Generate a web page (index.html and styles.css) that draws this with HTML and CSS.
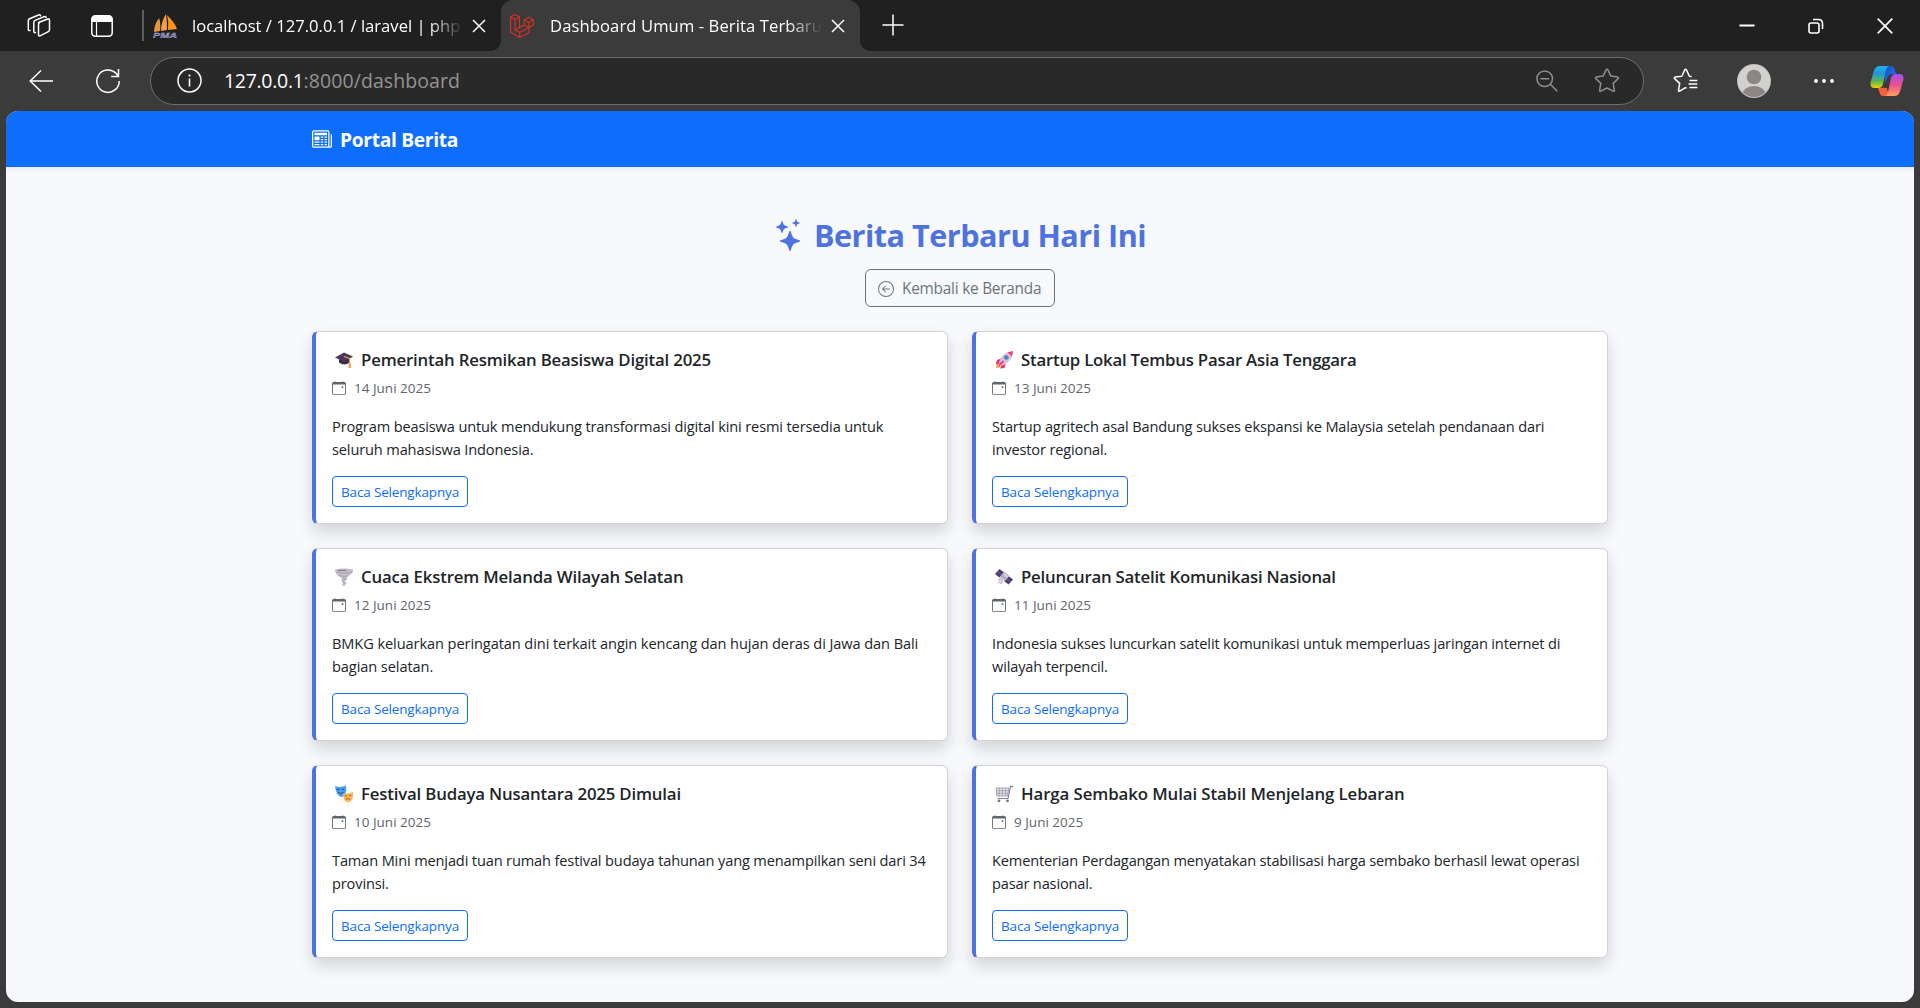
FILE: index.html
```html
<!DOCTYPE html>
<html lang="id">
<head>
<meta charset="utf-8">
<title>Dashboard Umum - Berita Terbaru</title>
<link rel="stylesheet" href="styles.css">
</head>
<body>
<svg class="defs" width="0" height="0">
  <symbol id="calendar" viewBox="0 0 16 16"><path d="M11 6.5a.5.5 0 0 1 .5-.5h1a.5.5 0 0 1 .5.5v1a.5.5 0 0 1-.5.5h-1a.5.5 0 0 1-.5-.5v-1z"/><path d="M3.5 0a.5.5 0 0 1 .5.5V1h8V.5a.5.5 0 0 1 1 0V1h1a2 2 0 0 1 2 2v11a2 2 0 0 1-2 2H2a2 2 0 0 1-2-2V3a2 2 0 0 1 2-2h1V.5a.5.5 0 0 1 .5-.5zM1 4v10a1 1 0 0 0 1 1h12a1 1 0 0 0 1-1V4H1z"/></symbol>
  <symbol id="close" viewBox="0 0 14 14"><path d="M1 1l12 12M13 1L1 13" fill="none" stroke="#fff" stroke-width="1.5"/></symbol>
</svg>

<header class="tabstrip">
  <svg class="workspaces" width="26" height="26" viewBox="0 0 26 26" fill="none" stroke="#fff" stroke-width="1.5" stroke-linejoin="round" stroke-linecap="round"><path d="M13.5 10.2l9.300-3.500q1.700-.6 1.700 1.200v9.600q0 1.300-1.200 1.800l-7.800 4q-2 .9-2-1.100v-9.800q0-1.700 1.200-2.200z" transform="translate(-1 -.7)"/><path d="M9.500 19.500q-1.700.6-1.700-1.200V9.500q0-1.500 1.300-2.100l9-3.700q1.700-.5 2 .8"/><path d="M4 17.500Q2.300 18 2.300 16V7.800q0-1.500 1.300-2.100L12.600 2q1.700-.5 2 .8"/></svg>
  <svg class="vertical-tabs" width="22" height="22" viewBox="0 0 22 22" fill="none"><rect x=".8" y=".8" width="20.400" height="20.400" rx="3.500" stroke="#fff" stroke-width="1.500"/><path d="M1 7V4q0-3 3-3h14q3 0 3 3v3z" fill="#fff"/><path d="M5.500 7v14" stroke="#fff" stroke-width="1.200"/></svg>
  <span class="divider"></span>
  <div class="tab">
    <svg width="24" height="24" viewBox="0 0 24 24"><path d="M6 4Q1 11 1 18l6-1Q8 9 6 4z" fill="#e8963c"/><path d="M13 0Q8 8 8 17l6-1Q14 7 13 0z" fill="#f0a04a"/><path d="M14 1q8 8 10 14l-9 1q1-8-1-15z" fill="#ff931e"/><text class="pma" x="0" y="23.500" textLength="24" lengthAdjust="spacingAndGlyphs">PMA</text></svg>
    <span class="tab-title tab-title-first">localhost / 127.0.0.1 / laravel | php</span>
    <svg width="14" height="14"><use href="#close"/></svg>
  </div>
  <div class="tab tab-active">
    <svg width="24" height="24" viewBox="0 0 24 24" fill="none" stroke="#d93025" stroke-width="1.150" stroke-linejoin="round"><path d="M.6 2.700L5 .6l4.500 2.100v11.100l4.700-2.700V5.900l4.700-2.600 4.500 2.600v5.200l-4.500 2.600v5L9.700 23.500.6 18.300zM.6 2.700L5 5.300l4.500-2.600M5 5.300v10.800l4.700 2.500 9.200-5M5 16.100l9.200-5M9.700 18.600v4.900M14.200 5.900l4.700 2.600 4.500-2.600M18.900 8.500v5.200l-4.700-2.600"/></svg>
    <span class="tab-title">Dashboard Umum - Berita Terbaru</span>
    <svg width="14" height="14"><use href="#close"/></svg>
  </div>
  <svg class="new-tab" width="22" height="22" viewBox="0 0 22 22"><path d="M.5 11h21M11 .5v21" stroke="#fff" stroke-width="1.500"/></svg>
  <div class="window-controls">
    <svg width="16" height="16" viewBox="0 0 16 16"><path d="M.5 7.500h15" stroke="#fff" stroke-width="2"/></svg>
    <svg width="16" height="16" viewBox="0 0 16 16" fill="none" stroke="#fff" stroke-width="1.600"><rect x="1" y="5" width="10" height="10" rx="2"/><path d="M5 1.500h5.500q4 0 4 4V11"/></svg>
    <svg width="16" height="16" viewBox="0 0 16 16"><path d="M.7.700l14.600 14.600M15.300.7L.7 15.300" stroke="#fff" stroke-width="1.700"/></svg>
  </div>
</header>

<div class="toolbar">
  <svg width="24" height="24" viewBox="0 0 24 24" fill="none" stroke="#fff" stroke-width="1.500"><path d="M24 12H1M12 1.500L1.200 12 12 22.500"/></svg>
  <svg class="reload" width="24" height="26" viewBox="0 0 24 26" fill="none" stroke="#fff" stroke-width="1.500"><path d="M23.200 13A11.200 11.200 0 1 1 20 5.300L22.300 8M22.500 1v7.500h-7.300"/></svg>
  <div class="address">
    <svg width="25" height="25" viewBox="0 0 25 25"><circle cx="12.500" cy="12.500" r="11.500" fill="none" stroke="#fff" stroke-width="1.500"/><path d="M12.500 10.500v8" stroke="#fff" stroke-width="1.600"/><circle cx="12.500" cy="7.500" r="1.100" fill="#fff"/></svg>
    <span class="url"><span class="host">127.0.0.1</span>:8000/dashboard</span>
    <svg class="zoom-out" width="22" height="22" viewBox="0 0 22 22" fill="none" stroke="#8f8f8f" stroke-width="1.500"><circle cx="8.700" cy="8.700" r="7.800"/><path d="M14.300 14.300l7 7M4.500 8.700h8.500"/></svg>
    <svg width="26" height="25" viewBox="0 0 26 25" fill="none" stroke="#8f8f8f" stroke-width="1.500" stroke-linejoin="round"><path d="M13 1.200q.6 0 .9.700l3 6.200 6.800 1q1.400.4.400 1.500l-4.900 4.800 1.200 6.900q.1 1.400-1.300.8L13 20l-6.100 3.100q-1.400.6-1.300-.8l1.200-6.900-4.900-4.800q-1-1.100.4-1.500l6.800-1 3-6.200q.3-.7.900-.7z"/></svg>
  </div>
  <svg class="favorites" width="25" height="25" viewBox="0 0 25 25" fill="none" stroke="#fff" stroke-width="1.500" stroke-linejoin="round" stroke-linecap="round"><path d="M13 19.900l-.5-.2-5.800 3.400q-1.400.6-1.200-.8l1.200-6.900-5.100-4.800q-.9-1.100.5-1.500l6.700-.9 2.900-6.200q.9-1.500 1.800 0l2.900 6.200 1.600.3"/><path d="M16.500 12.500h7.800M15.500 16h8.800M16.500 19.500h7.800" stroke-linecap="butt"/></svg>
  <svg class="avatar" width="34" height="34" viewBox="0 0 34 34"><clipPath id="disc"><circle cx="17" cy="17" r="16"/></clipPath><circle cx="17" cy="17" r="17" fill="#c2c0bd"/><circle cx="17" cy="17" r="16" fill="#d3d1ce"/><g clip-path="url(#disc)" fill="#8c8784"><circle cx="17" cy="13" r="7.300"/><path d="M4 31q4-9 13-9t13 9v3H4z"/></g></svg>
  <svg class="more" width="20" height="4" viewBox="0 0 20 4" fill="#fff"><circle cx="2" cy="2" r="1.900"/><circle cx="10" cy="2" r="1.900"/><circle cx="18" cy="2" r="1.900"/></svg>
  <svg class="copilot" width="34" height="32" viewBox="0 0 34 32">
    <defs>
      <linearGradient id="cp1" x1="0" y1="0" x2="0" y2="1"><stop offset="0" stop-color="#19b4ee"/><stop offset=".35" stop-color="#2395d8"/><stop offset=".7" stop-color="#5db84d"/><stop offset="1" stop-color="#f5d000"/></linearGradient>
      <linearGradient id="cp2" x1="0" y1="0" x2="0" y2="1"><stop offset="0" stop-color="#a04df0"/><stop offset=".5" stop-color="#ec5091"/><stop offset="1" stop-color="#ffa15c"/></linearGradient>
      <linearGradient id="cp3" x1="0" y1="0" x2="1" y2="1"><stop offset="0" stop-color="#1548c8"/><stop offset="1" stop-color="#2385ee"/></linearGradient>
    </defs>
    <path d="M15 1h6q2.500 0 3.500 3.500L26 9h-4q-3 0-4 3l-3 6z" fill="url(#cp3)"/>
    <path d="M8 23h4q3 0 4-3l3 11h-6q-2.500 0-3.500-3.500z" fill="#f4603c"/>
    <path d="M19 10h3l-3.500 13H14z" fill="#3b3b3b"/>
    <path d="M10 1h9q-2.300 1-3 4l-3 14q-1 4-4.500 4H4.500Q-.3 23 .7 17L4 5.500Q5.500 1 10 1z" fill="url(#cp1)"/>
    <path d="M24 31h-9q2.300-1 3-4l3-14q1-4 4.500-4h4q4.800 0 3.800 6L30 26.500Q28.500 31 24 31z" fill="url(#cp2)"/>
  </svg>
</div>

<div class="page">
  <nav class="navbar">
    <div class="container brand">
      <svg width="20" height="20" viewBox="0 0 16 16" fill="#fff"><path d="M0 2.500A1.500 1.500 0 0 1 1.500 1h11A1.500 1.500 0 0 1 14 2.500v10.528c0 .3-.05.654-.238.972h.738a.5.5 0 0 0 .5-.5v-9a.5.5 0 0 1 1 0v9a1.500 1.500 0 0 1-1.500 1.500H1.497A1.497 1.497 0 0 1 0 13.500v-11zM12 14c.37 0 .654-.211.853-.441.092-.106.147-.279.147-.531V2.500a.5.5 0 0 0-.5-.5h-11a.5.5 0 0 0-.5.5v11c0 .278.223.5.497.5H12z"/><path d="M2 3h10v2H2V3zm0 3h4v3H2V6zm0 4h4v1H2v-1zm0 2h4v1H2v-1zm5-6h2v1H7V6zm3 0h2v1h-2V6zM7 8h2v1H7V8zm3 0h2v1h-2V8zm-3 2h2v1H7v-1zm3 0h2v1h-2v-1zm-3 2h2v1H7v-1zm3 0h2v1h-2v-1z"/></svg>
      <span>Portal Berita</span>
    </div>
  </nav>

  <main class="container">
    <div class="hero">
      <h1 class="headline">
        <svg width="32" height="32" viewBox="0 0 16 16" fill="currentColor"><path d="M7.657 6.247c.11-.33.576-.33.686 0l.645 1.937a2.890 2.890 0 0 0 1.829 1.828l1.936.645c.33.11.33.576 0 .686l-1.937.645a2.890 2.890 0 0 0-1.828 1.829l-.645 1.936a.361.361 0 0 1-.686 0l-.645-1.937a2.890 2.890 0 0 0-1.828-1.828l-1.937-.645a.361.361 0 0 1 0-.686l1.937-.645a2.890 2.890 0 0 0 1.828-1.828zM3.794 1.148a.217.217 0 0 1 .412 0l.387 1.162c.173.518.579.924 1.097 1.097l1.162.387a.217.217 0 0 1 0 .412l-1.162.387A1.730 1.730 0 0 0 4.593 5.690l-.387 1.162a.217.217 0 0 1-.412 0L3.407 5.690A1.730 1.730 0 0 0 2.310 4.593l-1.162-.387a.217.217 0 0 1 0-.412l1.162-.387A1.730 1.730 0 0 0 3.407 2.310zM10.863.099a.145.145 0 0 1 .274 0l.258.774c.115.346.386.617.732.732l.774.258a.145.145 0 0 1 0 .274l-.774.258a1.160 1.160 0 0 0-.732.732l-.258.774a.145.145 0 0 1-.274 0l-.258-.774a1.160 1.160 0 0 0-.732-.732L9.100 2.137a.145.145 0 0 1 0-.274l.774-.258c.346-.115.617-.386.732-.732z"/></svg>
        <span>Berita Terbaru Hari Ini</span>
      </h1>
      <a class="back-button">
        <svg width="16" height="16" viewBox="0 0 16 16" fill="currentColor"><path d="M1 8a7 7 0 1 0 14 0A7 7 0 0 0 1 8zm15 0A8 8 0 1 1 0 8a8 8 0 0 1 16 0zm-4.500-.5a.5.5 0 0 1 0 1H5.707l2.147 2.146a.5.5 0 0 1-.708.708l-3-3a.5.5 0 0 1 0-.708l3-3a.5.5 0 1 1 .708.708L5.707 7.500H11.500z"/></svg>
        <span>Kembali ke Beranda</span>
      </a>
    </div>

    <div class="news-grid">
      <article class="card card-scholarship">
        <h2 class="card-title"><svg class="emoji" viewBox="0 0 18 18"><path d="M4 7v4.500q5 3.500 10 .5V7z" fill="#382b48"/><path d="M0 6.500L9 1.500l9 4L9.500 11z" fill="#483a5c"/><path d="M9 5.500l5.500 2v7" fill="none" stroke="#f09a4c" stroke-width="1.100"/><path d="M13.800 12h1.800l.6 5h-2.700z" fill="#f5a05c"/></svg>Pemerintah Resmikan Beasiswa Digital 2025</h2>
        <p class="date"><svg width="14" height="14"><use href="#calendar"/></svg>14 Juni 2025</p>
        <p class="summary">Program beasiswa untuk mendukung transformasi digital kini resmi tersedia untuk<br>seluruh mahasiswa Indonesia.</p>
        <a class="read-more">Baca Selengkapnya</a>
      </article>

      <article class="card card-startup">
        <h2 class="card-title"><svg class="emoji" viewBox="0 0 18 18"><path d="M1 17l1-5 4 4z" fill="#ff9d3c"/><path d="M7 7l-5 2-1.500 4.500 4-1zM11 11l-1.500 6-4.500.5 2-4z" fill="#f0336c"/><path d="M13 1Q7 3 4 11l3.500 3.500Q15 11 17 5z" fill="#cdc5dc"/><path d="M12.500 1.200L18 0l-1 5.600z" fill="#f8386c"/><circle cx="11.300" cy="6.500" r="2" fill="#3c86d8" stroke="#857d9e" stroke-width=".8"/><path d="M8.500 10L4 14.500" stroke="#ef3a70" stroke-width="1.800"/></svg>Startup Lokal Tembus Pasar Asia Tenggara</h2>
        <p class="date"><svg width="14" height="14"><use href="#calendar"/></svg>13 Juni 2025</p>
        <p class="summary">Startup agritech asal Bandung sukses ekspansi ke Malaysia setelah pendanaan dari<br>investor regional.</p>
        <a class="read-more">Baca Selengkapnya</a>
      </article>

      <article class="card card-weather">
        <h2 class="card-title"><svg class="emoji" viewBox="0 0 18 18"><path d="M0 1.500Q9-.5 18 1.500q.5 4-4 6l-2 1.500-.5 3.500L9 13l2.500 2-2 3-2.500-.5 1-2-1.500-2.500.5-3-3-1.500Q0 5.500 0 1.500z" fill="#c3bcc8"/><path d="M1 4q8 2.500 16 0M4 7.500q5 1.500 9 .5M7 11.500l4-.5M8 14l3 1" fill="none" stroke="#a59eac" stroke-width=".8"/><path d="M3 2.300h8" stroke="#766f7d" stroke-width="1"/></svg>Cuaca Ekstrem Melanda Wilayah Selatan</h2>
        <p class="date"><svg width="14" height="14"><use href="#calendar"/></svg>12 Juni 2025</p>
        <p class="summary">BMKG keluarkan peringatan dini terkait angin kencang dan hujan deras di Jawa dan Bali<br>bagian selatan.</p>
        <a class="read-more">Baca Selengkapnya</a>
      </article>

      <article class="card card-satellite">
        <h2 class="card-title"><svg class="emoji" viewBox="0 0 18 18"><path d="M4.500 1L9 4.500 4.500 9.500 0 6z" fill="#4b3d70"/><path d="M13.500 8L18 11.500l-4.500 5L9 13z" fill="#4b3d70"/><path d="M2.200 3.500l4.500 3.500M11.200 10.500l4.500 3.500" stroke="#8378a5" stroke-width=".7"/><path d="M9 3.500l5.500 4.500-4.500 5L5 9z" fill="#b7b0be"/><path d="M9 6l3.500 3" stroke="#e5e0e8" stroke-width="1.500"/><path d="M3 12q1.500-2.500 4-1l1 3q-1 2-3 1.500M5 13l-2 3" fill="#d8d3dc" stroke="#b9b3c0" stroke-width=".8"/></svg>Peluncuran Satelit Komunikasi Nasional</h2>
        <p class="date"><svg width="14" height="14"><use href="#calendar"/></svg>11 Juni 2025</p>
        <p class="summary">Indonesia sukses luncurkan satelit komunikasi untuk memperluas jaringan internet di<br>wilayah terpencil.</p>
        <a class="read-more">Baca Selengkapnya</a>
      </article>

      <article class="card card-festival">
        <h2 class="card-title"><svg class="emoji" viewBox="0 0 18 18"><path d="M0 1q5.500 2 11-.5Q12.500 10 6.500 12 1 11 0 1z" fill="#4b9df2"/><path d="M2 4.500h2.500M7 4.300h2.300M3 7.500q3 2 5.500-.2" fill="none" stroke="#1c4fa0" stroke-width="1"/><path d="M8 8.500q5 .8 10-1.500 1 9-5 10.500Q8 16.500 8 8.500z" fill="#fdb557"/><path d="M10 10.800h2M14.300 10.500h2M11 14.500q2-2.300 4 0" fill="none" stroke="#a85a26" stroke-width="1"/></svg>Festival Budaya Nusantara 2025 Dimulai</h2>
        <p class="date"><svg width="14" height="14"><use href="#calendar"/></svg>10 Juni 2025</p>
        <p class="summary">Taman Mini menjadi tuan rumah festival budaya tahunan yang menampilkan seni dari 34<br>provinsi.</p>
        <a class="read-more">Baca Selengkapnya</a>
      </article>

      <article class="card card-market">
        <h2 class="card-title"><svg class="emoji" viewBox="0 0 18 18" fill="none"><path d="M1 3h13l-1.500 8H2z" fill="#e9e6ee" stroke="#9c95a8" stroke-width=".9"/><path d="M1.500 5.700h12M1.700 8.300h11.500M4.200 3v8M7.300 3v8M10.500 3v8" stroke="#9c95a8" stroke-width=".8"/><path d="M18 1.500h-2.500L13 13.500H2.500" stroke="#8b8498" stroke-width="1.200"/><path d="M15.500 1.500H18" stroke="#5a86d0" stroke-width="1.500"/><circle cx="4" cy="15.800" r="1.400" fill="#66718c"/><circle cx="12.500" cy="15.800" r="1.400" fill="#66718c"/></svg>Harga Sembako Mulai Stabil Menjelang Lebaran</h2>
        <p class="date"><svg width="14" height="14"><use href="#calendar"/></svg>9 Juni 2025</p>
        <p class="summary">Kementerian Perdagangan menyatakan stabilisasi harga sembako berhasil lewat operasi<br>pasar nasional.</p>
        <a class="read-more">Baca Selengkapnya</a>
      </article>
    </div>
  </main>
</div>
</body>
</html>
```
FILE: styles.css
```css
*{box-sizing:border-box}
body{margin:0;height:1008px;overflow:hidden;background:#3b3b3b;font-family:"Open Sans","Noto Sans",sans-serif;color:#212529;display:flex;flex-direction:column}
svg{flex:none;display:block}
h1,h2,p{margin:0}
.defs{position:absolute}

/* Browser tabs */
.tabstrip{flex:none;height:51px;background:#202020;display:flex;align-items:center;padding-left:26px}
.vertical-tabs{margin-left:39px}
.divider{width:2px;height:31px;margin:0 0 0 29px;background:#5e5e5e}
.tab{width:357px;height:51px;padding:0 15px 0 9px;display:flex;align-items:center;color:#fff}
.tab>svg:first-child{margin-right:15px}
.tab-title{flex:1;min-width:0;overflow:hidden;white-space:nowrap;font-size:16.600px;letter-spacing:.1px;margin-right:9px;-webkit-mask-image:linear-gradient(90deg,#000 calc(100% - 34px),transparent);mask-image:linear-gradient(90deg,#000 calc(100% - 34px),transparent)}
.tab-title-first{letter-spacing:0}
.tab-active{position:relative;background:#3b3b3b;width:359px;border-radius:12px 12px 0 0}
.tab-active .tab-title{margin-left:1px}
.tab-active::before,.tab-active::after{content:"";position:absolute;bottom:0;width:10px;height:10px}
.tab-active::before{right:100%;background:radial-gradient(circle at 0 0,transparent 9.500px,#3b3b3b 10px)}
.tab-active::after{left:100%;background:radial-gradient(circle at 100% 0,transparent 9.500px,#3b3b3b 10px)}
.new-tab{margin:0 0 2px 22px}
.window-controls{margin-left:auto;padding-right:27px;display:flex;gap:53px}
.pma{font:italic 700 8px "Liberation Sans",sans-serif;fill:#5a5a96;stroke:#c8c8e6;stroke-width:.3px}

/* Browser toolbar */
.toolbar{flex:none;height:60px;padding:0 16px 1px 29px;display:flex;align-items:center}
.reload{margin-left:43px}
.address{width:1494px;height:48px;margin-left:30px;padding:0 23px 0 26px;border:1px solid #6d6d6d;border-radius:24px;background:#292929;display:flex;align-items:center}
.url{margin-left:22px;flex:1;font-size:19.500px;letter-spacing:.08px;color:#949494}
.host{color:#fff;letter-spacing:-.3px}
.zoom-out{margin-right:36px}
.favorites{margin-left:29px}
.avatar{margin-left:39px}
.more{margin-left:43px}
.copilot{margin-left:auto}

/* Portal page */
.page{height:891px;margin:0 6px;border-radius:12px;overflow:hidden;background:#f8f9fd}
.container{width:1296px;margin:0 auto}
.navbar{height:56px;background:#0d6efd;box-shadow:0 2px 4px rgba(0,0,0,.075);display:flex;align-items:center}
.brand{display:flex;align-items:center;gap:8px;color:#fff;font-size:19.200px;font-weight:700;letter-spacing:-.32px}
.hero{padding:49px 0 24px;display:flex;flex-direction:column;align-items:center}
.headline{height:38px;margin-bottom:15px;display:flex;align-items:center;gap:8px;color:#4e73df;font-size:30.600px;font-weight:700;letter-spacing:-.5px;line-height:38px}
.back-button{height:38px;width:190px;padding:1px 0 0 12px;border:1px solid #6c757d;border-radius:6px;display:flex;align-items:center;gap:8px;color:#6c757d;font-size:15.400px;letter-spacing:-.24px}
.news-grid{display:grid;grid-template-columns:1fr 1fr;gap:24px}
.card{height:193px;padding:17px 16px 15px;background:#fff;border:1px solid rgba(0,0,0,.175);border-left:4px solid #4e73df;border-radius:6px;box-shadow:0 8px 16px rgba(0,0,0,.15)}
.card-title{height:21px;margin-bottom:8px;padding-left:3px;display:flex;align-items:center;font-size:16.800px;font-weight:600;line-height:21px;white-space:nowrap}
.emoji{width:18px;height:18px;margin-right:8px}
.date{height:21px;margin-bottom:16px;display:flex;align-items:center;gap:8px;font-size:13.500px;color:#5f666d;line-height:21px}
.date svg{margin-bottom:1px;fill:#5f666d}
.summary{margin-bottom:15px;font-size:14.600px;line-height:22.800px;white-space:nowrap}
.read-more{display:flex;align-items:center;justify-content:center;width:136px;height:31px;padding-top:1px;border:1px solid #0d6efd;border-radius:4px;color:#0d6efd;font-size:13.500px;letter-spacing:-.16px}

.card-scholarship .card-title{letter-spacing:-.18px}
.card-scholarship .summary{letter-spacing:-.145px}
.card-startup .card-title{letter-spacing:-.22px}
.card-startup .summary{letter-spacing:-.155px}
.card-weather .card-title{letter-spacing:-.16px}
.card-weather .summary{letter-spacing:-.093px}
.card-satellite .card-title{letter-spacing:-.22px}
.card-satellite .summary{letter-spacing:-.161px}
.card-festival .card-title{letter-spacing:-.17px}
.card-festival .summary{letter-spacing:-.145px}
.card-market .card-title{letter-spacing:-.08px}
.card-market .summary{letter-spacing:-.164px}
```
